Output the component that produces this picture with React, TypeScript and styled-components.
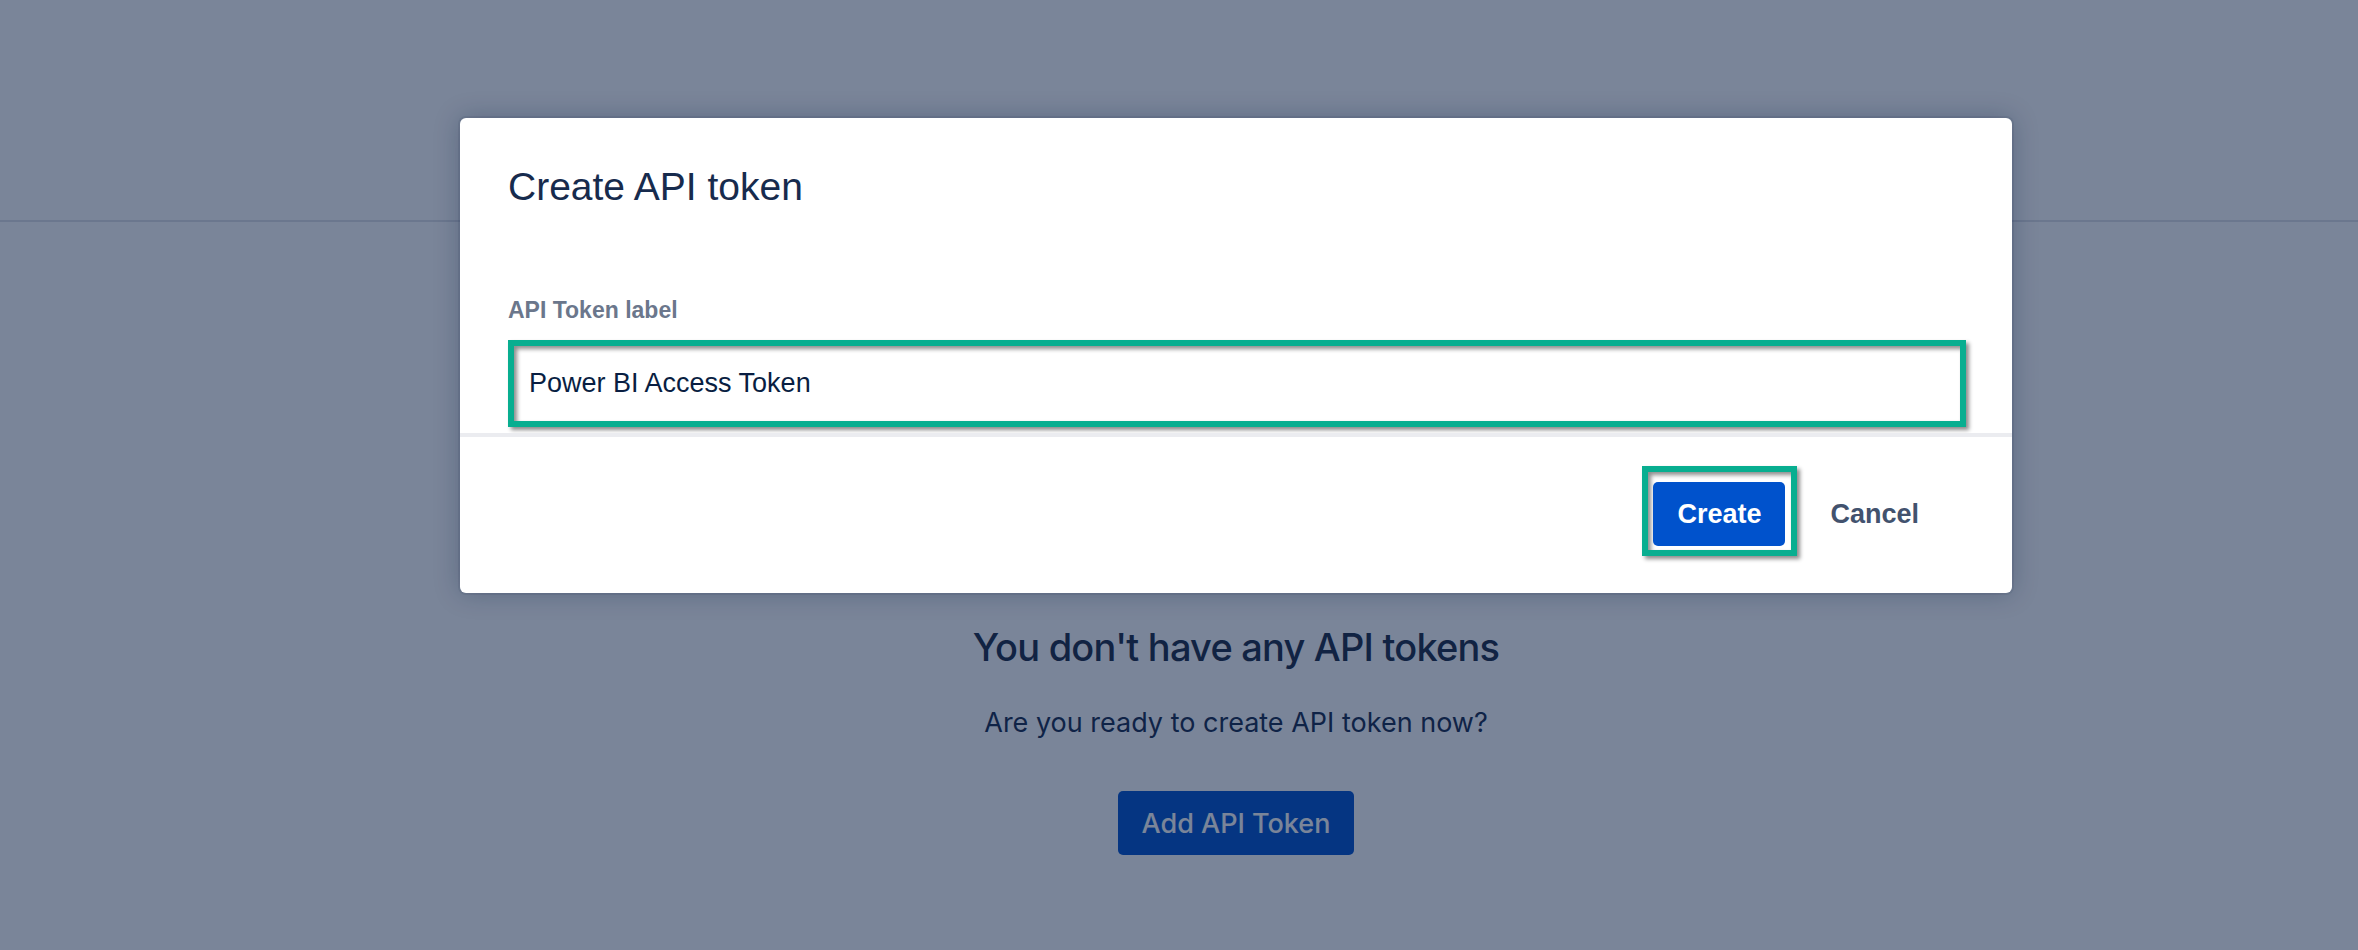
import React from "react";
import styled, { createGlobalStyle } from "styled-components";

const Global = createGlobalStyle`
  html, body {
    margin: 0;
    padding: 0;
    background: #ffffff;
    height: 950px;
    overflow: hidden;
  }
  * { box-sizing: border-box; }
`;

const Page = styled.div`
  position: relative;
  width: 2358px;
  height: 950px;
  font-family: Inter, "Noto Sans", sans-serif;
  color: #172b4d;
`;

const TopBar = styled.div`
  height: 222px;
  border-bottom: 2px solid #dfe1e6;
`;

const Empty = styled.div`
  display: flex;
  flex-direction: column;
  align-items: center;
  padding-left: 114px;
  padding-top: 402px;
`;

const EmptyTitle = styled.h2`
  margin: 0;
  font-size: 38px;
  line-height: 47px;
  font-weight: 500;
  letter-spacing: -0.8px;
  color: #1c2a44;
`;

const EmptyText = styled.p`
  margin: 34px 0 0;
  font-size: 27px;
  line-height: 36px;
  font-weight: 400;
  color: #172b4d;
`;

const PrimaryButton = styled.button`
  margin-top: 50px;
  height: 64px;
  padding: 0 24px;
  border: none;
  border-radius: 5px;
  background: #0052cc;
  color: #ffffff;
  font-family: Inter, "Noto Sans", sans-serif;
  font-size: 27px;
  font-weight: 500;
`;

const Blanket = styled.div`
  position: absolute;
  inset: 0;
  background: rgba(9, 30, 66, 0.54);
  display: flex;
  justify-content: center;
  align-items: flex-start;
  padding-left: 114px;
  padding-top: 118px;
`;

const Dialog = styled.div`
  width: 1552px;
  background: #ffffff;
  border-radius: 6px;
  box-shadow: 0 0 0 2px rgba(9, 30, 66, 0.08), 0 0 26px rgba(9, 30, 66, 0.28);
  font-family: "Liberation Sans", Arial, sans-serif;
  overflow: hidden;
`;

const DialogBody = styled.div`
  padding: 45px 46px 6px 48px;
`;

const DialogTitle = styled.h1`
  margin: 0;
  font-size: 39px;
  line-height: 47px;
  font-weight: 400;
  color: #172b4d;
`;

const FieldLabel = styled.label`
  display: block;
  margin-top: 86px;
  font-size: 23px;
  line-height: 28px;
  font-weight: 700;
  color: #6b778c;
`;

const Highlight = styled.div<{ pad: string }>`
  border: 6px solid #08ae90;
  padding: ${(p) => p.pad};
  box-shadow: 3px 3px 4px rgba(0, 0, 0, 0.45), inset 3px 3px 4px rgba(0, 0, 0, 0.45);
`;

const FieldWrap = styled(Highlight)`
  margin-top: 16px;
`;

const TextInput = styled.input`
  display: block;
  width: 100%;
  height: 75px;
  border: none;
  outline: none;
  background: transparent;
  padding: 0 15px;
  font-family: "Liberation Sans", Arial, sans-serif;
  font-size: 27px;
  color: #091e42;
`;

const Divider = styled.div`
  height: 4px;
  background: #ebecf0;
`;

const DialogFooter = styled.div`
  display: flex;
  justify-content: flex-end;
  align-items: flex-start;
  padding: 29px 69px 37px 0;
`;

const CreateButton = styled.button`
  display: block;
  height: 64px;
  padding: 0 24px;
  border: none;
  border-radius: 5px;
  background: #0052cc;
  color: #ffffff;
  font-family: "Liberation Sans", Arial, sans-serif;
  font-size: 27px;
  font-weight: 700;
`;

const CancelButton = styled.button`
  margin: 16px 0 0 9px;
  height: 64px;
  padding: 0 24px;
  border: none;
  background: transparent;
  color: #42526e;
  font-family: "Liberation Sans", Arial, sans-serif;
  font-size: 27px;
  font-weight: 700;
`;

export default function App() {
  return (
    <Page>
      <Global />
      <TopBar />
      <Empty>
        <EmptyTitle>You don't have any API tokens</EmptyTitle>
        <EmptyText>Are you ready to create API token now?</EmptyText>
        <PrimaryButton>Add API Token</PrimaryButton>
      </Empty>
      <Blanket>
        <Dialog>
          <DialogBody>
            <DialogTitle>Create API token</DialogTitle>
            <FieldLabel>API Token label</FieldLabel>
            <FieldWrap pad="0">
              <TextInput readOnly value="Power BI Access Token" />
            </FieldWrap>
          </DialogBody>
          <Divider />
          <DialogFooter>
            <Highlight pad="10px 6px 4px 5px">
              <CreateButton>Create</CreateButton>
            </Highlight>
            <CancelButton>Cancel</CancelButton>
          </DialogFooter>
        </Dialog>
      </Blanket>
    </Page>
  );
}
